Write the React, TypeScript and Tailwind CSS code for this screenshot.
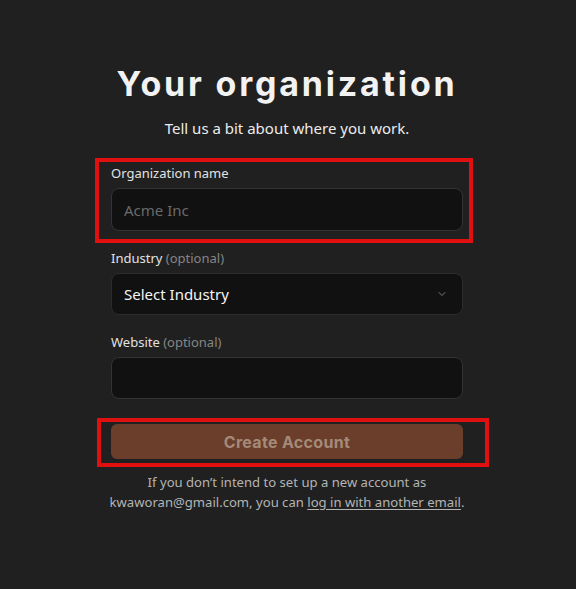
import { ChevronDown } from 'lucide-react';

export default function App() {
  return (
    <div className="relative min-h-[589px] w-full bg-[#202020] pr-[2px] font-['Noto_Sans',sans-serif]">
      {/* Annotation overlays */}
      <div className="pointer-events-none absolute left-[95px] top-[158px] h-[85px] w-[378px] border-4 border-[#e01010]" />
      <div className="pointer-events-none absolute left-[97px] top-[418px] h-[49px] w-[392px] border-4 border-[#e01010]" />

      <div className="mx-auto w-[352px] pt-[62px]">
        {/* Header */}
        <h1 className="-mx-10 whitespace-nowrap text-center font-['Inter',sans-serif] text-[34px] font-bold leading-[44px] tracking-[2.8px] text-[#f2f2f2]">
          Your organization
        </h1>
        <p className="mt-[11px] text-center text-[15px] leading-[22px] text-[#ececec]">
          Tell us a bit about where you work.
        </p>

        {/* Form */}
        <form className="mt-[24px] flex flex-col gap-[17px]">
          <div className="flex flex-col gap-[5px]">
            <label className="text-[13px] leading-5 text-[#e2e2e2]">Organization name</label>
            <input
              placeholder="Acme Inc"
              className="h-[43px] w-full rounded-lg border border-[#333333] bg-[#111111] px-[12px] text-[15px] text-white outline-none placeholder:text-[#6a6a6a]"
            />
          </div>

          <div className="flex flex-col gap-[5px]">
            <label className="text-[13px] leading-5 text-[#e2e2e2]">
              Industry <span className="text-[#858585]">(optional)</span>
            </label>
            <div className="flex h-[42px] w-full items-center justify-between rounded-lg border border-[#2c2c2c] bg-[#111111] px-[12px]">
              <span className="text-[15px] text-[#f5f5f5]">Select Industry</span>
              <ChevronDown className="mr-[2px] h-[12px] w-[12px] text-[#7a7a7a]" strokeWidth={2} />
            </div>
          </div>

          <div className="flex flex-col gap-[5px]">
            <label className="text-[13px] leading-5 text-[#e2e2e2]">
              Website <span className="text-[#858585]">(optional)</span>
            </label>
            <input className="h-[42px] w-full rounded-lg border border-[#333333] bg-[#111111] px-[12px] text-[15px] text-white outline-none" />
          </div>

          <button
            type="button"
            className="mt-[8px] h-[35px] w-full rounded-md bg-[#6a3e2b] font-['Inter',sans-serif] text-[16px] font-bold tracking-[0.02em] text-[#a58a78]"
          >
            Create Account
          </button>
        </form>

        <p className="-mx-6 mt-[13px] whitespace-nowrap text-center text-[13.1px] leading-5 text-[#b4b4b4]">
          If you don’t intend to set up a new account as
          <br />
          kwaworan@gmail.com, you can{' '}
          <a href="#" className="underline underline-offset-2">log in with another email</a>.
        </p>
      </div>
    </div>
  );
}
